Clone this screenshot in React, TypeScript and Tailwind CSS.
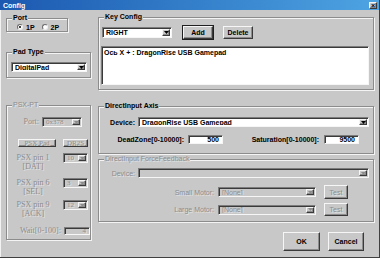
import React from 'react';

const font = "font-['Liberation_Sans',Arial,sans-serif]";
const serifCls = "font-['Liberation_Serif',serif] text-[8px]";
const serifSmall = "font-['Liberation_Serif',serif] text-[7px]";
const sunk = 'border border-t-[#7c7c7c] border-l-[#7c7c7c] border-b-[#f6f6f6] border-r-[#f6f6f6] shadow-[inset_1px_1px_0_#3a3a3a]';
const raised = 'border border-t-[#f6f6f6] border-l-[#f6f6f6] border-b-[#3a3a3a] border-r-[#3a3a3a] shadow-[inset_-1px_-1px_0_#8c8c8c]';
const dim = 'text-[#8c8c8c] [text-shadow:1px_1px_0_#e2e2e2]';

type Kids = { children?: React.ReactNode; className?: string };

const Group = ({ title, disabled, className = '', children }: Kids & { title: string; disabled?: boolean }) => (
  <fieldset className={`border border-[#8c8c8c] shadow-[inset_1px_1px_0_#f4f4f4,1px_1px_0_#f4f4f4] ${className}`}>
    <legend className={`ml-[5px] px-[1px] h-[8px] leading-[8px] bg-[#c8c8c8] ${disabled ? `${dim} font-normal` : ''}`}>
      {title}
    </legend>
    {children}
  </fieldset>
);

const Arrow = ({ disabled }: { disabled?: boolean }) => (
  <div className={`w-[8px] self-stretch bg-[#c8c8c8] ${raised} flex items-center justify-center`}>
    <svg width="5" height="3" viewBox="0 0 5 3">
      <path d="M0 0h5L2.5 3z" fill={disabled ? '#8c8c8c' : '#000'} />
    </svg>
  </div>
);

const Select = ({ text, disabled, serif, className = '' }: { text?: string; disabled?: boolean; serif?: boolean; className?: string }) => (
  <div className={`flex items-stretch p-[1px] ${sunk} ${disabled ? 'bg-[#c8c8c8]' : 'bg-white'} ${className}`}>
    <span className={`flex-1 pl-[2px] flex items-center overflow-hidden whitespace-nowrap leading-none ${disabled ? `${dim} font-normal` : ''} ${serif ? serifSmall : ''}`}>
      {text}
    </span>
    <Arrow disabled={disabled} />
  </div>
);

const Field = ({ text, disabled, className = '' }: { text: string; disabled?: boolean; className?: string }) => (
  <div className={`flex items-center justify-end pr-[3px] leading-none ${sunk} ${disabled ? `bg-[#c8c8c8] ${dim} font-normal ${serifSmall}` : 'bg-white'} ${className}`}>
    {text}
  </div>
);

const Button = ({ children, disabled, serif, className = '' }: Kids & { disabled?: boolean; serif?: boolean }) => (
  <div className={`flex items-center justify-center whitespace-nowrap leading-none bg-[#c8c8c8] ${raised} ${disabled ? `${dim} font-normal` : ''} ${serif ? serifSmall : ''} ${className}`}>
    {children}
  </div>
);

const Radio = ({ on, label }: { on?: boolean; label: string }) => (
  <div className="flex items-center gap-[3px]">
    <div className="w-[6px] h-[6px] rounded-full bg-white border border-t-[#6c6c6c] border-l-[#6c6c6c] border-b-[#eeeeee] border-r-[#eeeeee] flex items-center justify-center">
      {on && <div className="w-[2px] h-[2px] rounded-full bg-black" />}
    </div>
    <span>{label}</span>
  </div>
);

const PinRow = ({ pin, tag, value, className = '' }: { pin: string; tag: string; value: string; className?: string }) => (
  <div className={`flex items-start ${className}`}>
    <div className={`w-[52px] flex flex-col items-center leading-[9px] font-normal ${serifCls} ${dim}`}>
      <span>{pin}</span>
      <span>{tag}</span>
    </div>
    <Select text={value} disabled serif className="ml-[4px] w-[25px] h-[10px]" />
  </div>
);

export default function App() {
  return (
    <div className={`w-[380px] h-[258px] bg-[#c8c8c8] flex flex-col text-[7px] font-bold text-black leading-none ${font} border-r border-b border-[#404040]`}>
      <div className="h-[10px] flex items-center justify-between pl-[3px] pr-[2px] bg-gradient-to-r from-[#1c58b0] to-[#4ea4e2]">
        <span className="text-white text-[7px] font-bold">Config</span>
        <div className={`w-[8px] h-[7px] bg-[#c8c8c8] ${raised} flex items-center justify-center text-[7px] leading-none`}>×</div>
      </div>

      <div className="flex flex-1 pl-[5px] border-l border-[#f2f2f2]">
        {/* left column */}
        <div className="w-[85px] flex flex-col pt-[4px]">
          <Group title="Port" className="w-[62px] h-[18px]">
            <div className="h-[10px] flex items-center pl-[10px] gap-[7px]">
              <Radio on label="1P" />
              <Radio label="2P" />
            </div>
          </Group>

          <Group title="Pad Type" className="w-[85px] h-[30px] mt-[16px]">
            <Select text="DigitalPad" className="ml-[4px] mt-[6px] w-[76px] h-[10px]" />
          </Group>

          <Group title="PSX-PT" disabled className="w-[85px] h-[139px] mt-[23px]">
            <div className="flex items-center mt-[8px]">
              <span className={`w-[32px] text-right font-normal ${serifCls} ${dim}`}>Port:</span>
              <Select text="0x378" disabled serif className="ml-[3px] w-[40px] h-[10px]" />
            </div>
            <div className="flex mt-[12px] pl-[11px]">
              <Button disabled serif className="w-[38px] h-[8px]">PSX Pad</Button>
              <Button disabled serif className="ml-[7px] w-[25px] h-[8px]">DR2S</Button>
            </div>
            <PinRow pin="PSX pin 1" tag="[DAT]" value="10" className="mt-[6px]" />
            <PinRow pin="PSX pin 6" tag="[SEL]" value="3" className="mt-[7px]" />
            <PinRow pin="PSX pin 9" tag="[ACK]" value="12" className="mt-[4px]" />
            <div className="flex items-center mt-[9px]">
              <span className={`w-[54px] text-right font-normal ${serifCls} ${dim}`}>Wait[0-100]:</span>
              <Field text="4" disabled className="ml-[3px] w-[26px] h-[8px]" />
            </div>
          </Group>
        </div>

        {/* right column */}
        <div className="ml-[7px] w-[276px] flex flex-col pt-[3px]">
          <Group title="Key Config" className="h-[77px]">
            <div className="flex items-center mt-[5px] ml-[3px]">
              <Select text="RIGHT" className="w-[70px] h-[11px]" />
              <Button className="ml-[11px] w-[30px] h-[13px] outline outline-1 outline-[#202020]">Add</Button>
              <Button className="ml-[10px] w-[30px] h-[13px]">Delete</Button>
            </div>
            <div className={`mt-[7px] ml-[2px] w-[268px] h-[39px] bg-white ${sunk} px-[2px] pt-[2px]`}>
              Ось X + : DragonRise USB Gamepad
            </div>
          </Group>

          <Group title="DirectInput Axis" className="h-[52px] mt-[12px]">
            <div className="flex items-center mt-[7px]">
              <span className="w-[36px] text-right">Device:</span>
              <Select text="DragonRise USB Gamepad" className="ml-[3px] w-[231px] h-[10px]" />
            </div>
            <div className="flex items-center mt-[8px]">
              <span className="w-[85px] text-right">DeadZone[0-10000]:</span>
              <Field text="500" className="ml-[4px] w-[35px] h-[9px]" />
              <span className="w-[96px] text-right">Saturation[0-10000]:</span>
              <Field text="9500" className="ml-[5px] w-[35px] h-[9px]" />
            </div>
          </Group>

          <Group title="DirectInput ForceFeedback" disabled className="h-[67px] mt-[1px]">
            <div className="flex items-center mt-[5px]">
              <span className={`w-[36px] text-right font-normal ${dim}`}>Device:</span>
              <Select disabled className="ml-[3px] w-[231px] h-[10px]" />
            </div>
            <div className="flex items-center mt-[7px]">
              <span className={`w-[115px] text-right font-normal ${dim}`}>Small Motor:</span>
              <Select text="[None]" disabled className="ml-[4px] w-[98px] h-[10px]" />
              <Button disabled className="ml-[8px] w-[24px] h-[14px]">Test</Button>
            </div>
            <div className="flex items-center mt-[4px]">
              <span className={`w-[115px] text-right font-normal ${dim}`}>Large Motor:</span>
              <Select text="[None]" disabled className="ml-[4px] w-[98px] h-[10px]" />
              <Button disabled className="ml-[8px] w-[24px] h-[13px]">Test</Button>
            </div>
          </Group>

          <div className="flex mt-[10px] ml-[185px]">
            <Button className="w-[37px] h-[19px]">OK</Button>
            <Button className="ml-[8px] w-[36px] h-[19px]">Cancel</Button>
          </div>
        </div>
      </div>
    </div>
  );
}
